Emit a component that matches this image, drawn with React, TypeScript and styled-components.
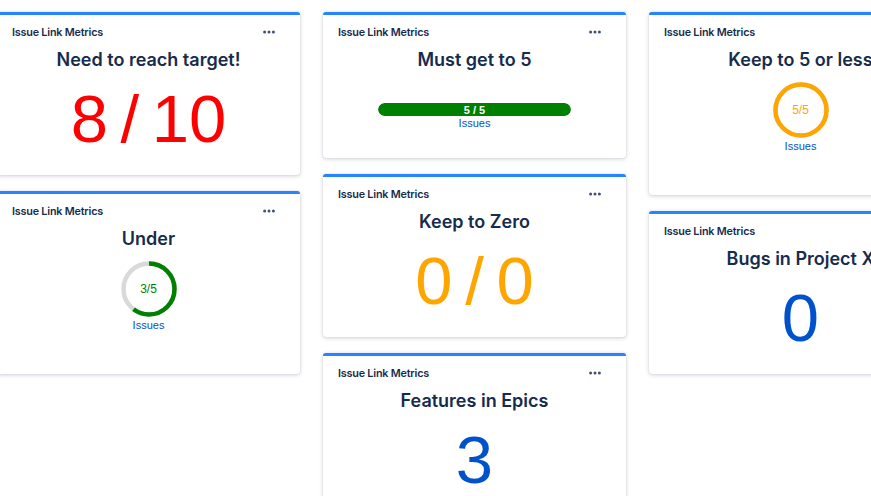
import React from "react";
import styled, { createGlobalStyle } from "styled-components";

const GlobalStyle = createGlobalStyle`
  html, body { margin: 0; padding: 0; background: #ffffff; }
  body { overflow: hidden; font-family: Inter, "Noto Sans", sans-serif; }
  #root { width: 871px; height: 496px; overflow: hidden; }
`;

type Kind = "number" | "bar" | "ring";

interface Metric {
  title: string;
  kind: Kind;
  text?: string;
  value?: number;
  total?: number;
  color: string;
}

const columns: Metric[][] = [
  [
    { title: "Need to reach target!", kind: "number", text: "8 / 10", color: "#FF0000" },
    { title: "Under", kind: "ring", value: 3, total: 5, color: "#008000" },
  ],
  [
    { title: "Must get to 5", kind: "bar", value: 5, total: 5, color: "#008000" },
    { title: "Keep to Zero", kind: "number", text: "0 / 0", color: "#FFA500" },
    { title: "Features in Epics", kind: "number", text: "3", color: "#0052CC" },
  ],
  [
    { title: "Keep to 5 or less", kind: "ring", value: 5, total: 5, color: "#FFA500" },
    { title: "Bugs in Project X", kind: "number", text: "0", color: "#0052CC" },
  ],
];

const Board = styled.div`
  display: grid;
  grid-template-columns: repeat(3, 303px);
  column-gap: 23px;
  align-items: start;
  padding-top: 12px;
  margin-left: -3px;
`;

const Column = styled.div`
  display: flex;
  flex-direction: column;
  gap: 16px;
`;

const Card = styled.section`
  background: #ffffff;
  border-top: 3px solid #2684ff;
  border-radius: 3px;
  box-shadow: 0 1px 4px rgba(9, 30, 66, 0.2), 0 0 1px rgba(9, 30, 66, 0.22);
  padding: 9px 22px 18px 15px;
  display: flex;
  flex-direction: column;
`;

const Header = styled.div`
  display: flex;
  align-items: center;
  justify-content: space-between;
  height: 16px;
`;

const HeaderTitle = styled.span`
  font-size: 10.8px;
  font-weight: 600;
  letter-spacing: -0.2px;
  color: #172b4d;
`;

const MoreButton = styled.span`
  display: flex;
  align-items: center;
  margin-right: 3px;
  color: #42526e;
`;

const Title = styled.h2`
  margin: 8px 0 0;
  height: 24px;
  line-height: 24px;
  font-size: 18px;
  font-weight: 600;
  color: #172b4d;
  text-align: center;
  white-space: nowrap;
  padding-left: 7px;
`;

const bodyHeights: Record<Kind, { h: number; pt: number }> = {
  number: { h: 85, pt: 9 },
  bar: { h: 68, pt: 31 },
  ring: { h: 105, pt: 10 },
};

const Body = styled.div<{ $kind: Kind }>`
  height: ${(p) => bodyHeights[p.$kind].h}px;
  padding-top: ${(p) => bodyHeights[p.$kind].pt}px;
  box-sizing: border-box;
  display: flex;
  flex-direction: column;
  align-items: center;
  padding-left: 7px;
`;

const BigNumber = styled.div<{ $color: string }>`
  font-family: "Liberation Sans", Arial, sans-serif;
  font-size: 67px;
  line-height: 76px;
  font-weight: 400;
  word-spacing: -6px;
  color: ${(p) => p.$color};
  white-space: pre;
`;

const BarTrack = styled.div`
  width: 193px;
  height: 13px;
  border-radius: 7px;
  background: #dfe1e6;
  overflow: hidden;
  position: relative;
`;

const BarFill = styled.div<{ $color: string }>`
  height: 100%;
  background: ${(p) => p.$color};
  border-radius: 7px;
`;

const BarLabel = styled.span`
  position: absolute;
  inset: 0;
  display: flex;
  align-items: center;
  justify-content: center;
  font-family: "Liberation Sans", Arial, sans-serif;
  font-size: 11px;
  font-weight: 700;
  color: #ffffff;
`;

const IssuesLink = styled.span`
  font-family: "Liberation Sans", Arial, sans-serif;
  font-size: 11px;
  line-height: 14px;
  color: #0052cc;
`;

const RingWrap = styled.div`
  position: relative;
  width: 56px;
  height: 56px;
`;

const RingLabel = styled.span<{ $color: string }>`
  position: absolute;
  inset: 0;
  display: flex;
  align-items: center;
  justify-content: center;
  font-family: "Liberation Sans", Arial, sans-serif;
  font-size: 12px;
  color: ${(p) => p.$color};
`;

const RingIssues = styled(IssuesLink)`
  margin-top: 1px;
`;

function Dots() {
  return (
    <svg width="12" height="4" viewBox="0 0 12 4">
      <circle cx="1.6" cy="2" r="1.5" fill="currentColor" />
      <circle cx="6" cy="2" r="1.5" fill="currentColor" />
      <circle cx="10.4" cy="2" r="1.5" fill="currentColor" />
    </svg>
  );
}

function Ring({ value, total, color }: { value: number; total: number; color: string }) {
  const r = 25.5;
  const c = 2 * Math.PI * r;
  const frac = total ? value / total : 0;
  return (
    <RingWrap>
      <svg width="56" height="56" viewBox="0 0 56 56">
        <circle cx="28" cy="28" r={r} fill="none" stroke="#d9d9d9" strokeWidth="4.5" />
        <circle
          cx="28"
          cy="28"
          r={r}
          fill="none"
          stroke={color}
          strokeWidth="4.5"
          strokeDasharray={`${c * frac} ${c}`}
          transform="rotate(-90 28 28)"
        />
      </svg>
      <RingLabel $color={color}>
        {value}/{total}
      </RingLabel>
    </RingWrap>
  );
}

function MetricCard({ m }: { m: Metric }) {
  return (
    <Card>
      <Header>
        <HeaderTitle>Issue Link Metrics</HeaderTitle>
        <MoreButton>
          <Dots />
        </MoreButton>
      </Header>
      <Title>{m.title}</Title>
      <Body $kind={m.kind}>
        {m.kind === "number" && <BigNumber $color={m.color}>{m.text}</BigNumber>}
        {m.kind === "bar" && (
          <>
            <BarTrack>
              <BarFill
                $color={m.color}
                style={{ width: `${((m.value ?? 0) / (m.total || 1)) * 100}%` }}
              />
              <BarLabel>
                {m.value} / {m.total}
              </BarLabel>
            </BarTrack>
            <IssuesLink>Issues</IssuesLink>
          </>
        )}
        {m.kind === "ring" && (
          <>
            <Ring value={m.value ?? 0} total={m.total ?? 0} color={m.color} />
            <RingIssues>Issues</RingIssues>
          </>
        )}
      </Body>
    </Card>
  );
}

export default function App() {
  return (
    <>
      <GlobalStyle />
      <Board>
        {columns.map((col, i) => (
          <Column key={i}>
            {col.map((m) => (
              <MetricCard key={m.title} m={m} />
            ))}
          </Column>
        ))}
      </Board>
    </>
  );
}
